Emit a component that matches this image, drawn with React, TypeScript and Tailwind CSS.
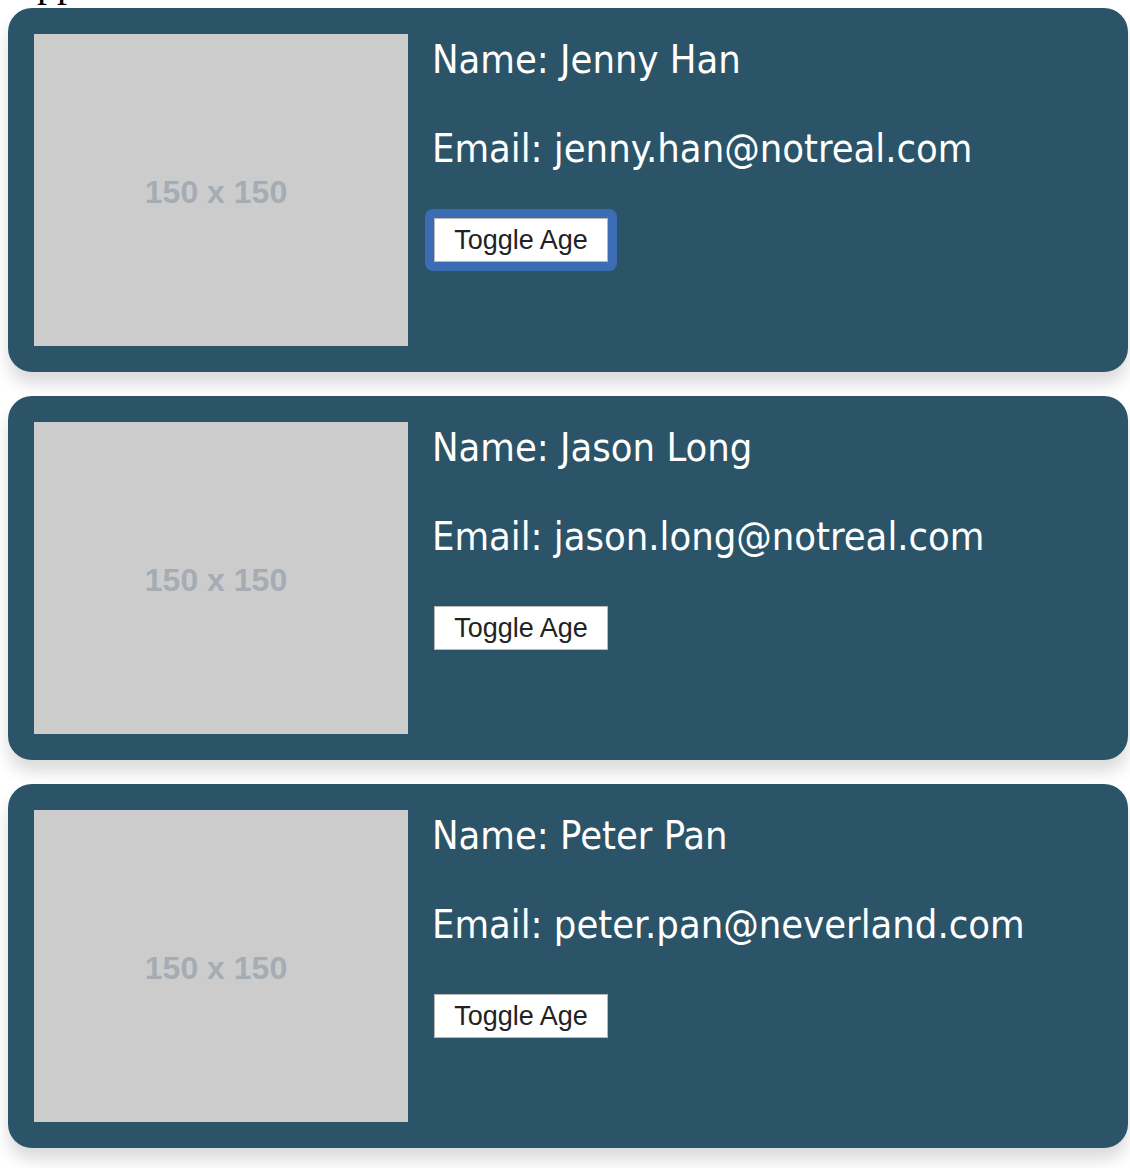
import React from "react";

const people = [
  { name: "Jenny Han", email: "jenny.han@notreal.com" },
  { name: "Jason Long", email: "jason.long@notreal.com" },
  { name: "Peter Pan", email: "peter.pan@neverland.com" },
];

function Card({ name, email, focused }: { name: string; email: string; focused?: boolean }) {
  const button = (
    <button className="h-[44px] w-[174px] bg-white border border-[#b8b8b8] text-[27px] leading-none text-[#222] font-['Liberation_Sans',Arial,sans-serif] flex items-center justify-center">
      Toggle Age
    </button>
  );
  return (
    <div className="w-[1120px] h-[364px] rounded-[24px] bg-[#2c5468] p-[26px] flex gap-[24px] shadow-[0_12px_16px_rgba(0,0,0,0.14)]">
      <div className="w-[374px] h-[312px] bg-[#cccccc] flex items-center justify-center shrink-0">
        <span className="text-[32px] font-bold text-[#a5acb3] font-['Liberation_Sans',Arial,sans-serif] ml-[-10px] mt-[4px]">
          150 x 150
        </span>
      </div>
      <div className="flex flex-col items-start text-white text-[39.5px] leading-[48px] font-['DejaVu_Sans_Condensed','DejaVu_Sans',sans-serif] font-stretch-condensed">
        <div className="mt-[1px]">Name: {name}</div>
        <div className="mt-[41px]">Email: {email}</div>
        <div className="mt-[46px] ml-[2px]">
          {focused ? (
            <div className="rounded-[8px] bg-[#3c6cb4] p-[9px] -m-[9px]">{button}</div>
          ) : (
            button
          )}
        </div>
      </div>
    </div>
  );
}

export default function App() {
  return (
    <div className="bg-white min-h-[1168px] pl-[8px]">
      <div className="h-[8px] overflow-hidden">
        <div className="mt-[-37px] text-[40px] leading-[40px] text-black font-['Liberation_Serif','Times_New_Roman',serif]">
          App
        </div>
      </div>
      <div className="flex flex-col gap-[24px]">
        {people.map((p, i) => (
          <Card key={p.email} name={p.name} email={p.email} focused={i === 0} />
        ))}
      </div>
    </div>
  );
}
